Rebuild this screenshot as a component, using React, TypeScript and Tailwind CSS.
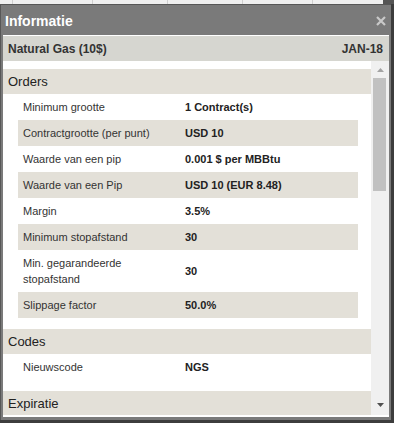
const orders: [string, string][] = [
  ["Minimum grootte", "1 Contract(s)"],
  ["Contractgrootte (per punt)", "USD 10"],
  ["Waarde van een pip", "0.001 $ per MBBtu"],
  ["Waarde van een Pip", "USD 10 (EUR 8.48)"],
  ["Margin", "3.5%"],
  ["Minimum stopafstand", "30"],
  ["Min. gegarandeerde stopafstand", "30"],
  ["Slippage factor", "50.0%"],
];

const codes: [string, string][] = [["Nieuwscode", "NGS"]];

function Section({ title, rows }: { title: string; rows: [string, string][] }) {
  return (
    <div className="pb-[11px]">
      <div className="h-[25px] bg-[#e3e0d8] pl-[5px] text-[13px] leading-[25px] text-[#222]">
        {title}
      </div>
      {rows.map(([label, value], i) => (
        <div
          key={label}
          className={`ml-[15px] mr-[13px] flex text-[11px] leading-[16px] ${
            i % 2 === 1 ? "bg-[#e3e0d8]" : "bg-white"
          }`}
        >
          <div className="w-[167px] shrink-0 py-[5px] pl-[5px] pr-[10px] text-[#333]">{label}</div>
          <div className="flex items-center py-[5px] font-bold text-[#222]">{value}</div>
        </div>
      ))}
    </div>
  );
}

export default function App() {
  return (
    <div className="h-[423px] w-[394px] overflow-hidden bg-[#3d3d3d] font-['Liberation_Sans',Arial,sans-serif]">
      {/* page behind the dialog */}
      <div className="flex h-[4px] bg-[#efefef]">
        <div className="w-[13px] border-r border-[#cfcfcf]" />
        <div className="w-[80px] border-r border-[#cfcfcf]" />
        <div className="w-[75px] border-r border-[#cfcfcf]" />
        <div className="w-[75px] border-r border-[#cfcfcf]" />
        <div className="w-[70px] border-r border-[#cfcfcf]" />
        <div className="w-[70px]" />
        <div className="flex-1 bg-[#555]" />
      </div>

      <div className="flex h-[416px] w-[391px] flex-col border-l border-t border-[#575757] bg-[#7a7a7a] pb-[3px] pl-[2px] pr-[2px]">
        <div className="flex h-[30px] shrink-0 items-center justify-between pl-[2px] pr-[3px]">
          <span className="pt-[2px] text-[14px] font-bold text-white">Informatie</span>
          <svg width="10" height="10" viewBox="0 0 10 10" className="mt-[2px]">
            <path d="M1 1 L9 9 M9 1 L1 9" stroke="#c9c9c9" strokeWidth="2.2" />
          </svg>
        </div>

        <div className="flex flex-1 flex-col bg-white pb-[2px] pt-[1px]">
          <div className="flex h-[25px] shrink-0 items-center justify-between bg-[#d6d6d0] pl-[5px] pr-[6px] text-[12px] font-bold text-[#333]">
            <span>Natural Gas (10$)</span>
            <span>JAN-18</span>
          </div>

          <div className="flex h-[354px] shrink-0">
            <div className="w-[368px] overflow-hidden pt-[8px]">
              <Section title="Orders" rows={orders} />
              <Section title="Codes" rows={codes} />
              <Section title="Expiratie" rows={[]} />
            </div>

            <div className="flex w-[18px] flex-col bg-[#f0f0f0]">
              <div className="flex h-[17px] items-center justify-center">
                <svg width="7" height="4" viewBox="0 0 7 4">
                  <polygon points="0,4 7,4 3.5,0" fill="#a3a3a3" />
                </svg>
              </div>
              <div className="ml-[2px] h-[113px] w-[13px] bg-[#c1c1c1]" />
              <div className="flex-1" />
              <div className="flex h-[20px] items-center justify-center">
                <svg width="7" height="4" viewBox="0 0 7 4">
                  <polygon points="0,0 7,0 3.5,4" fill="#505050" />
                </svg>
              </div>
            </div>
          </div>
        </div>
      </div>
    </div>
  );
}
